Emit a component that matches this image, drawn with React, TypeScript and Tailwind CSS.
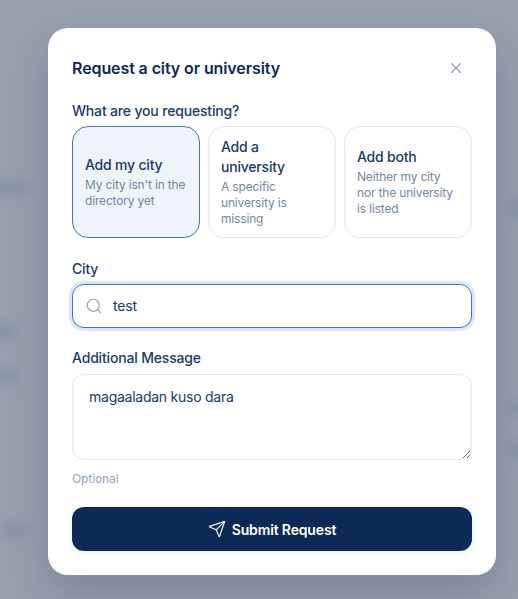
import { Search, Send, X } from "lucide-react";

const font = { fontFamily: "Inter, 'Noto Sans', sans-serif" };

function Option({ title, desc, active }: { title: string; desc: string; active?: boolean }) {
  return (
    <button
      className={
        "flex-1 min-w-0 h-[112px] rounded-2xl border text-left px-3 flex flex-col justify-center " +
        (active ? "border-[#3f74c0] bg-[#eff4fb]" : "border-[#dce7f3] bg-white")
      }
    >
      <span className="block text-[14px] leading-[20px] font-[450] tracking-[-0.2px] text-[#1a3a66]">{title}</span>
      <span className="block mt-[2px] text-[12px] leading-[16px] tracking-[-0.17px] text-[#7486a0]">{desc}</span>
    </button>
  );
}

const blobs = [
  "left-[-14px] top-[180px] w-[42px] h-[16px]",
  "left-[-10px] top-[322px] w-[28px] h-[18px]",
  "left-[-10px] top-[367px] w-[30px] h-[18px]",
  "left-[0px] top-[522px] w-[28px] h-[16px]",
  "left-[512px] top-[196px] w-[20px] h-[26px]",
  "left-[510px] top-[400px] w-[20px] h-[16px]",
  "left-[510px] top-[440px] w-[20px] h-[20px]",
];

export default function App() {
  return (
    <div style={font} className="relative w-[518px] h-[599px] overflow-hidden bg-[#989fad] pl-[48px] pt-[28px]">
      {blobs.map((b) => (
        <div key={b} className={"absolute rounded-full bg-[#7d8ca3] opacity-50 blur-[5px] " + b} />
      ))}
      <div className="relative w-[448px] h-[547px] rounded-[20px] bg-white p-6 shadow-[0_20px_40px_rgba(15,23,42,0.18)]">
        <div className="flex items-center justify-between h-[32px]">
          <h2 className="text-[16px] font-semibold text-[#0c2a55] tracking-[-0.1px]">Request a city or university</h2>
          <X className="w-[18px] h-[18px] mr-[7px] text-[#8a99ad]" strokeWidth={1.5} />
        </div>

        <div className="mt-[17px] text-[14px] leading-[20px] font-[450] tracking-[-0.17px] text-[#1a3a66]">What are you requesting?</div>
        <div className="mt-[5px] flex gap-2">
          <Option active title="Add my city" desc="My city isn't in the directory yet" />
          <Option title="Add a university" desc="A specific university is missing" />
          <Option title="Add both" desc="Neither my city nor the university is listed" />
        </div>

        <div className="mt-[21px] text-[14px] leading-[20px] font-[450] tracking-[-0.17px] text-[#1a3a66]">City</div>
        <div className="mt-[5px] h-[44px] rounded-xl border border-[#3f74c0] ring-[3px] ring-[#dce7f4] bg-white flex items-center pl-3 pb-[1px] gap-[10px]">
          <Search className="w-[18px] h-[18px] text-[#94a3b8]" strokeWidth={1.5} />
          <span className="text-[14px] tracking-[-0.2px] text-[#1a3a66]">test</span>
        </div>

        <div className="mt-[20px] text-[14px] leading-[20px] font-[450] tracking-[-0.17px] text-[#1a3a66]">Additional Message</div>
        <textarea
          readOnly
          defaultValue="magaaladan kuso dara"
          className="mt-[6px] block w-full h-[86px] rounded-xl border border-[#dce7f3] px-4 py-[12px] text-[14px] leading-[20px] tracking-[-0.25px] text-[#1a3a66] outline-none"
        />
        <div className="mt-[11px] text-[12px] leading-[16px] tracking-[-0.1px] text-[#94a3b8]">Optional</div>

        <button className="mt-[20px] w-full h-[44px] rounded-xl bg-[#0c2a55] text-white text-[14px] font-semibold tracking-[-0.15px] flex items-center justify-center gap-[6px] shadow-[0_2px_6px_rgba(12,42,85,0.08)]">
          <Send className="w-[18px] h-[18px]" strokeWidth={1.5} />
          Submit Request
        </button>
      </div>
    </div>
  );
}
